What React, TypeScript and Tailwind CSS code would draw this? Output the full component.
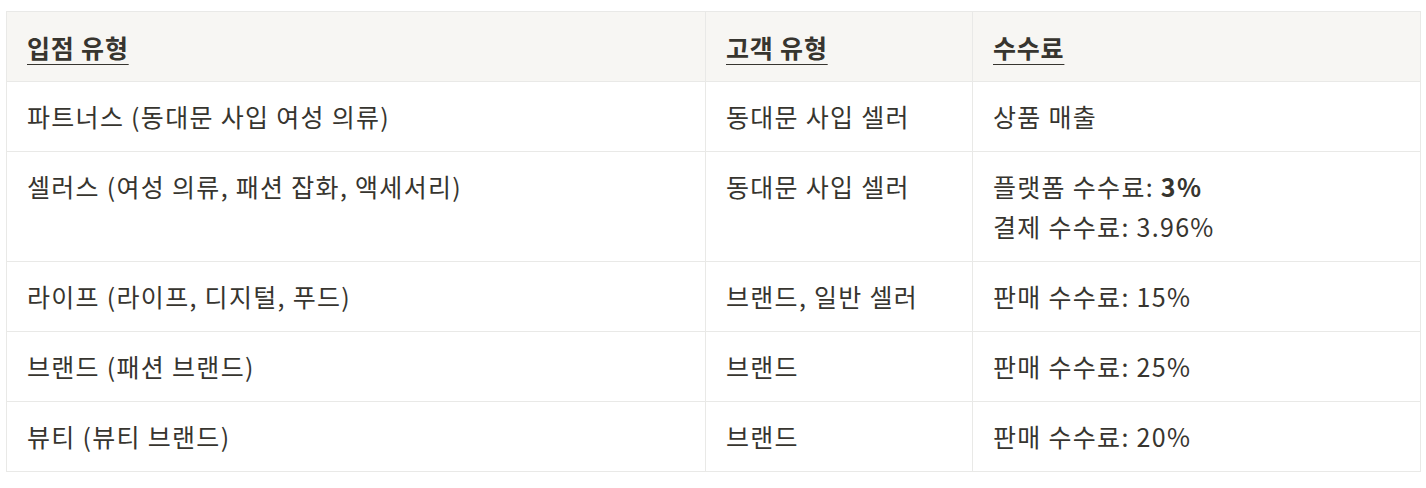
import React from "react"

const rows: { store: string; customer: string; fee: React.ReactNode }[] = [
  { store: "파트너스 (동대문 사입 여성 의류)", customer: "동대문 사입 셀러", fee: "상품 매출" },
  {
    store: "셀러스 (여성 의류, 패션 잡화, 액세서리)",
    customer: "동대문 사입 셀러",
    fee: (
      <>
        <div>
          플랫폼 수수료: <span className="font-bold">3%</span>
        </div>
        <div>결제 수수료: 3.96%</div>
      </>
    ),
  },
  { store: "라이프 (라이프, 디지털, 푸드)", customer: "브랜드, 일반 셀러", fee: "판매 수수료: 15%" },
  { store: "브랜드 (패션 브랜드)", customer: "브랜드", fee: "판매 수수료: 25%" },
  { store: "뷰티 (뷰티 브랜드)", customer: "브랜드", fee: "판매 수수료: 20%" },
]

const App = () => {
  return (
    <div
      className="bg-white min-h-[488px] pt-[11px] pl-[6px] text-[#37352f]"
      style={{ fontFamily: '"Noto Sans CJK KR", "Noto Sans", sans-serif' }}
    >
      <table className="table-fixed border-collapse w-[1414px] text-[25px] tracking-[1.3px] leading-[40px]">
        <colgroup>
          <col className="w-[699px]" />
          <col className="w-[267px]" />
          <col className="w-[448px]" />
        </colgroup>
        <thead>
          <tr className="bg-[#f7f6f3]">
            {["입점 유형", "고객 유형", "수수료"].map((h) => (
              <th
                key={h}
                className="border border-[#e9e9e7] px-5 pt-[15px] pb-[14px] text-left align-top font-semibold tracking-[0.8px]"
              >
                <span className="underline underline-offset-[6px] decoration-1">{h}</span>
              </th>
            ))}
          </tr>
        </thead>
        <tbody>
          {rows.map((r, i) => (
            <tr key={i}>
              <td className="border border-[#e9e9e7] px-5 pt-[14px] pb-[15px] align-top">{r.store}</td>
              <td className="border border-[#e9e9e7] px-5 pt-[14px] pb-[15px] align-top">{r.customer}</td>
              <td className="border border-[#e9e9e7] px-5 pt-[14px] pb-[15px] align-top">{r.fee}</td>
            </tr>
          ))}
        </tbody>
      </table>
    </div>
  )
}

export default App
